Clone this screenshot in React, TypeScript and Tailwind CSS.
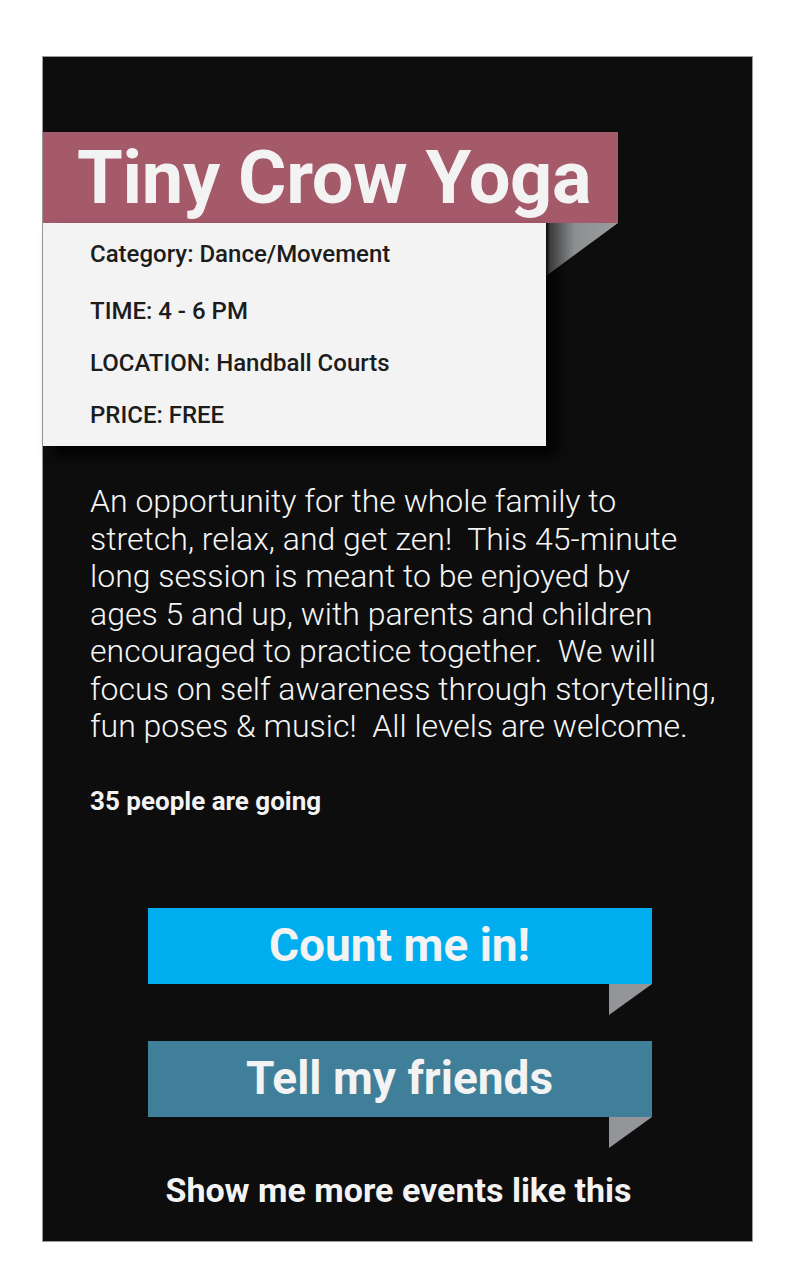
import React from 'react'

const details = [
  { label: 'Category: Dance/Movement', gap: '' },
  { label: 'TIME: 4 - 6 PM', gap: 'mt-[27px]' },
  { label: 'LOCATION: Handball Courts', gap: 'mt-[22px]' },
  { label: 'PRICE: FREE', gap: 'mt-[22px]' },
]

const description = [
  'An opportunity for the whole family to',
  'stretch, relax, and get zen!  This 45-minute',
  'long session is meant to be enjoyed by',
  'ages 5 and up, with parents and children',
  'encouraged to practice together.  We will',
  'focus on self awareness through storytelling,',
  'fun poses & music!  All levels are welcome.',
]

function Fold() {
  return (
    <svg width="43" height="31" viewBox="0 0 43 31">
      <polygon points="0,0 43,0 0,31" fill="#939598" />
    </svg>
  )
}

function RibbonButton({ label, color }: { label: string; color: string }) {
  return (
    <div className="flex flex-col items-end w-[504px]">
      <button
        className={`w-full h-[76px] ${color} text-[#f3f3f3] text-[46px] font-bold flex items-center justify-center`}
      >
        {label}
      </button>
      <Fold />
    </div>
  )
}

export default function App() {
  return (
    <div className="min-h-screen bg-white pt-[56px] pl-[42px]" style={{ fontFamily: 'Roboto, "Liberation Sans", sans-serif' }}>
      <div className="w-[711px] h-[1186px] bg-[#0d0d0d] border border-[#9a9a9a] pt-[75px] flex flex-col">
        {/* title ribbon */}
        <div className="w-[575px] h-[91px] bg-[#a55a6a] flex items-center pl-[34px]">
          <h1 className="text-[74px] font-bold text-[#f3f3f3] leading-none tracking-[-0.3px]">Tiny Crow Yoga</h1>
        </div>

        {/* info card */}
        <div className="flex items-start">
          <div className="w-[503px] h-[223px] bg-[#f3f3f3] pt-[16px] pl-[47px] shadow-[10px_10px_12px_rgba(0,0,0,0.9)] flex flex-col">
            {details.map((d) => (
              <p key={d.label} className={`${d.gap} text-[24px] leading-[30px] font-medium text-[#1c1c1c]`}>
                {d.label}
              </p>
            ))}
          </div>
          <svg width="72" height="53" viewBox="0 0 72 53">
            <defs>
              <linearGradient id="fold" x1="0" x2="1" y1="0" y2="0">
                <stop offset="0" stopColor="#050505" />
                <stop offset="0.06" stopColor="#3c3d3e" />
                <stop offset="0.4" stopColor="#8d8f91" />
                <stop offset="1" stopColor="#9a9c9e" />
              </linearGradient>
            </defs>
            <polygon points="0,0 72,0 0,53" fill="url(#fold)" />
          </svg>
        </div>

        {/* description */}
        <div className="pl-[47px] mt-[37px] text-[#f5f5f5] text-[32px] font-light leading-[37.5px]">
          {description.map((line) => (
            <p key={line} className="whitespace-pre">{line}</p>
          ))}
        </div>

        <p className="pl-[47px] mt-[40px] text-[26px] font-bold text-[#f3f3f3] leading-[30px]">35 people are going</p>

        {/* actions */}
        <div className="flex flex-col items-center mt-[92px] gap-[26px] pl-[4px]">
          <RibbonButton label="Count me in!" color="bg-[#00aeef]" />
          <RibbonButton label="Tell my friends" color="bg-[#3f7f99]" />
        </div>
        <p className="text-center text-[34px] font-bold text-[#f3f3f3] leading-none mt-[25px] pl-[2px]">
          Show me more events like this
        </p>
      </div>
    </div>
  )
}
